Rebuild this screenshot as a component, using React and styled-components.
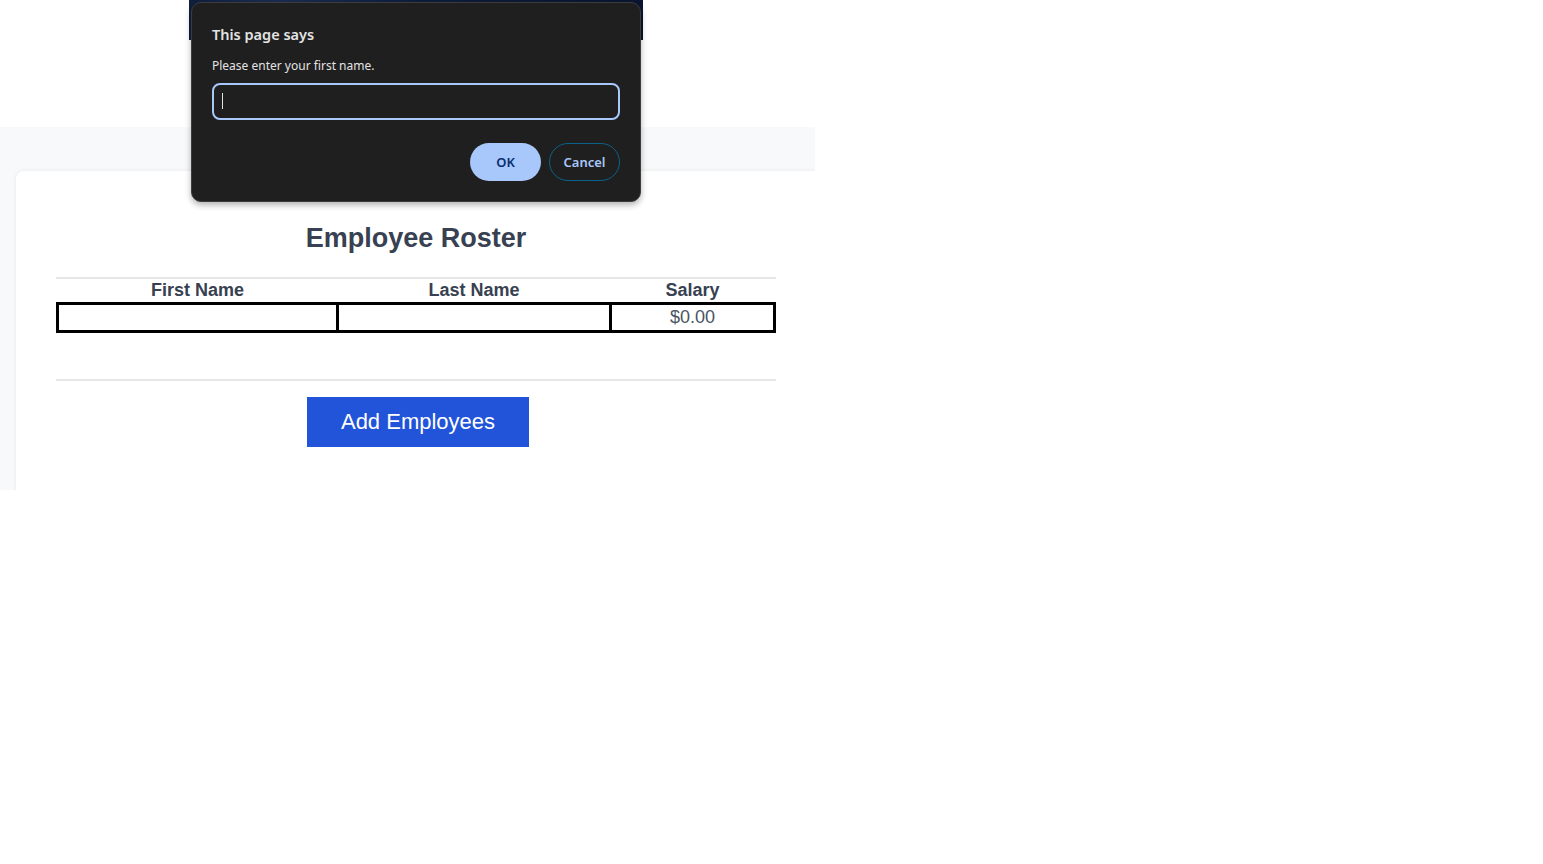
import React, { useState } from 'react';
import styled, { createGlobalStyle } from 'styled-components';

const GlobalStyle = createGlobalStyle`
  html, body {
    margin: 0;
    padding: 0;
    background: #ffffff;
  }
  body {
    font-family: "Liberation Sans", Arial, sans-serif;
  }
`;

const employees = [{ id: 1, firstName: '', lastName: '', salary: 0 }];

const formatSalary = (value) => `$${value.toFixed(2)}`;

const App = () => {
  const [name, setName] = useState('');

  return (
    <>
      <GlobalStyle />
      <Page>
        <TopArea>
          <Banner />
        </TopArea>

        <Section>
          <Card>
            <Title>Employee Roster</Title>
            <Rule $gap={23} />
            <Roster>
              <thead>
                <tr>
                  <HeadCell>First Name</HeadCell>
                  <HeadCell>Last Name</HeadCell>
                  <HeadCell>Salary</HeadCell>
                </tr>
              </thead>
              <tbody>
                {employees.map(emp => (
                  <tr key={emp.id}>
                    <Cell>{emp.firstName}</Cell>
                    <Cell>{emp.lastName}</Cell>
                    <Cell>{formatSalary(emp.salary)}</Cell>
                  </tr>
                ))}
              </tbody>
            </Roster>
            <Rule $gap={46} />
            <AddButton>Add Employees</AddButton>
          </Card>
        </Section>

        <Dialog>
          <DialogTitle>This page says</DialogTitle>
          <DialogMessage>Please enter your first name.</DialogMessage>
          <InputWrap>
            <PromptInput value={name} onChange={e => setName(e.target.value)} />
            {!name && <Caret />}
          </InputWrap>
          <DialogActions>
            <PrimaryButton>OK</PrimaryButton>
            <OutlineButton>Cancel</OutlineButton>
          </DialogActions>
        </Dialog>
      </Page>
    </>
  );
};

export default App;

const Page = styled.div`
  position: relative;
  width: 815px;
`;

const TopArea = styled.div`
  height: 127px;
  padding-left: 189px;
  box-sizing: border-box;
`;

const Banner = styled.div`
  width: 454px;
  height: 40px;
  background: radial-gradient(circle at 20% 30%, #1b2d52 0, transparent 40%),
    linear-gradient(90deg, #0a1630, #0d1d3b 50%, #0a1630);
`;

const Section = styled.div`
  height: 363px;
  padding: 44px 0 0 16px;
  box-sizing: border-box;
  background: #f8f9fb;
  overflow: hidden;
`;

const Card = styled.div`
  height: 100%;
  padding: 51px 39px 0 40px;
  background: #ffffff;
  border-radius: 8px 0 0 0;
  box-shadow: 0 0 4px rgba(0, 0, 0, 0.07);
  display: flex;
  flex-direction: column;
  align-items: center;
`;

const Title = styled.h2`
  margin: 0;
  font-size: 27px;
  line-height: 32px;
  font-weight: 700;
  color: #374151;
`;

const Rule = styled.hr`
  align-self: stretch;
  margin: ${p => p.$gap || 24}px 0 0;
  border: none;
  height: 2px;
  background: #e6e6e6;
`;

const Roster = styled.table`
  width: 100%;
  border-collapse: collapse;
  table-layout: fixed;
  color: #374151;

  th:nth-child(1), td:nth-child(1) { width: 280px; }
  th:nth-child(2), td:nth-child(2) { width: 273px; }
`;

const HeadCell = styled.th`
  padding: 0;
  height: 23px;
  font-size: 18px;
  font-weight: 700;
  text-align: center;
  vertical-align: middle;
`;

const Cell = styled.td`
  border: 3px solid #000;
  height: 25px;
  padding: 0;
  font-size: 18px;
  text-align: center;
  color: #4b5563;
`;

const AddButton = styled.button`
  margin-top: 16px;
  margin-left: 4px;
  width: 222px;
  height: 50px;
  border: none;
  background: #2154d8;
  color: #ffffff;
  font-family: "Liberation Sans", Arial, sans-serif;
  font-size: 22px;
  cursor: pointer;
`;

const Dialog = styled.div`
  position: absolute;
  left: 191px;
  top: 2px;
  width: 450px;
  height: 200px;
  box-sizing: border-box;
  padding: 20px 20px 20px 20px;
  background: #1f1f1f;
  border: 1px solid #3c3c3c;
  border-radius: 10px;
  box-shadow: 0 3px 6px rgba(0, 0, 0, 0.3);
  font-family: "Noto Sans", "Open Sans", sans-serif;
  color: #e3e3e3;
  display: flex;
  flex-direction: column;
`;

const DialogTitle = styled.div`
  font-size: 14.5px;
  font-weight: 600;
  line-height: 22px;
`;

const DialogMessage = styled.div`
  margin-top: 12px;
  font-size: 12px;
  line-height: 18px;
`;

const InputWrap = styled.div`
  position: relative;
  margin-top: 8px;
  display: flex;
`;

const PromptInput = styled.input`
  flex: 1;
  height: 37px;
  box-sizing: border-box;
  padding: 0 9px;
  background: #1f1f1f;
  border: 2px solid #a8c7fa;
  border-radius: 8px;
  color: #e3e3e3;
  caret-color: #e3e3e3;
  font-family: inherit;
  font-size: 13px;
  outline: none;
`;

const Caret = styled.span`
  position: absolute;
  left: 10px;
  top: 10px;
  width: 1px;
  height: 16px;
  background: #e3e3e3;
  pointer-events: none;
`;

const DialogActions = styled.div`
  margin-top: auto;
  display: flex;
  justify-content: flex-end;
  gap: 8px;
`;

const PrimaryButton = styled.button`
  width: 71px;
  height: 38px;
  border: none;
  border-radius: 19px;
  background: #a8c7fa;
  color: #062e6f;
  font-family: inherit;
  font-size: 13px;
  font-weight: 600;
`;

const OutlineButton = styled.button`
  width: 71px;
  height: 38px;
  border: 1px solid #0b6289;
  border-radius: 19px;
  background: transparent;
  color: #a8c7fa;
  font-family: inherit;
  font-size: 13px;
  font-weight: 600;
`;
